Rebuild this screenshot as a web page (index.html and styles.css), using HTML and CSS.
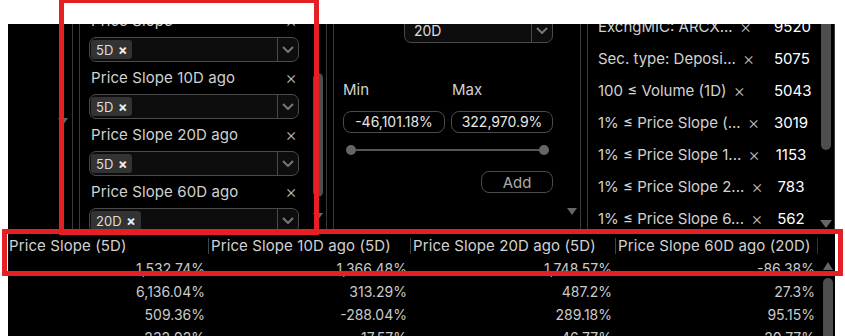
FILE: index.html
```html
<!DOCTYPE html>
<html lang="en">
<head>
  <meta charset="UTF-8">
  <meta name="viewport" content="width=device-width, initial-scale=1.0">
  <title>Screener</title>
  <link rel="stylesheet" href="styles.css">
</head>
<body>

  <div class="app">
    <div class="filtros">

      <div class="col col-a">
        <span class="flecha-abajo"></span>
      </div>

      <div class="col col-b">
        <div class="contenido lista">
          <div class="item">
            <div class="item-titulo"><span>Price Slope</span><span class="quitar">&times;</span></div>
            <div class="select">
              <div class="chips"><span class="chip">5D <b>&times;</b></span></div>
              <span class="select-flecha"><svg width="12" height="7" viewBox="0 0 12 7"><polyline points="1,1 6,6 11,1" fill="none" stroke="#777" stroke-width="2"/></svg></span>
            </div>
          </div>
          <div class="item">
            <div class="item-titulo"><span>Price Slope 10D ago</span><span class="quitar">&times;</span></div>
            <div class="select">
              <div class="chips"><span class="chip">5D <b>&times;</b></span></div>
              <span class="select-flecha"><svg width="12" height="7" viewBox="0 0 12 7"><polyline points="1,1 6,6 11,1" fill="none" stroke="#777" stroke-width="2"/></svg></span>
            </div>
          </div>
          <div class="item">
            <div class="item-titulo"><span>Price Slope 20D ago</span><span class="quitar">&times;</span></div>
            <div class="select">
              <div class="chips"><span class="chip">5D <b>&times;</b></span></div>
              <span class="select-flecha"><svg width="12" height="7" viewBox="0 0 12 7"><polyline points="1,1 6,6 11,1" fill="none" stroke="#777" stroke-width="2"/></svg></span>
            </div>
          </div>
          <div class="item">
            <div class="item-titulo"><span>Price Slope 60D ago</span><span class="quitar">&times;</span></div>
            <div class="select">
              <div class="chips"><span class="chip">20D <b>&times;</b></span></div>
              <span class="select-flecha"><svg width="12" height="7" viewBox="0 0 12 7"><polyline points="1,1 6,6 11,1" fill="none" stroke="#777" stroke-width="2"/></svg></span>
            </div>
          </div>
        </div>
        <div class="gutter gutter-b">
          <div class="thumb"></div>
          <span class="flecha-abajo"></span>
        </div>
      </div>

      <div class="col col-c">
        <div class="contenido rango">
          <div class="select plano">
            <span class="plano-texto">20D</span>
            <span class="select-flecha"><svg width="12" height="7" viewBox="0 0 12 7"><polyline points="1,1 6,6 11,1" fill="none" stroke="#777" stroke-width="2"/></svg></span>
          </div>
          <div class="min-max etiquetas">
            <span>Min</span>
            <span class="max">Max</span>
          </div>
          <div class="min-max valores">
            <span class="valor">-46,101.18%</span>
            <span class="valor">322,970.9%</span>
          </div>
          <div class="slider">
            <span class="knob"></span>
            <span class="pista"></span>
            <span class="knob"></span>
          </div>
          <button type="button" class="add">Add</button>
        </div>
        <div class="gutter gutter-c">
          <span class="flecha-abajo"></span>
        </div>
      </div>

      <div class="col col-d">
        <div class="contenido resumen">
          <div class="fila-filtro"><span>ExchgMIC: ARCX...</span><span class="quitar">&times;</span><span class="num">9520</span></div>
          <div class="fila-filtro"><span>Sec. type: Deposi...</span><span class="quitar">&times;</span><span class="num">5075</span></div>
          <div class="fila-filtro"><span>100 &le; Volume (1D)</span><span class="quitar">&times;</span><span class="num">5043</span></div>
          <div class="fila-filtro"><span>1% &le; Price Slope (...</span><span class="quitar">&times;</span><span class="num">3019</span></div>
          <div class="fila-filtro"><span>1% &le; Price Slope 1...</span><span class="quitar">&times;</span><span class="num">1153</span></div>
          <div class="fila-filtro"><span>1% &le; Price Slope 2...</span><span class="quitar">&times;</span><span class="num">783</span></div>
          <div class="fila-filtro"><span>1% &le; Price Slope 6...</span><span class="quitar">&times;</span><span class="num">562</span></div>
        </div>
        <div class="gutter gutter-d">
          <div class="thumb"></div>
          <span class="flecha-abajo ancha"></span>
        </div>
      </div>

    </div>

    <div class="tabla">
      <div class="cabecera">
        <div class="th">Price Slope (5D)</div>
        <div class="th">Price Slope 10D ago (5D)</div>
        <div class="th">Price Slope 20D ago (5D)</div>
        <div class="th">Price Slope 60D ago (20D)</div>
      </div>
      <div class="cuerpo">
        <div class="filas">
          <div class="fila"><span>1,532.74%</span><span>1,366.48%</span><span>1,748.57%</span><span>-86.38%</span></div>
          <div class="fila"><span>6,136.04%</span><span>313.29%</span><span>487.2%</span><span>27.3%</span></div>
          <div class="fila"><span>509.36%</span><span>-288.04%</span><span>289.18%</span><span>95.15%</span></div>
          <div class="fila"><span>232.92%</span><span>17.57%</span><span>46.77%</span><span>20.77%</span></div>
        </div>
        <div class="barra-tabla">
          <span class="flecha-arriba"></span>
          <div class="thumb"></div>
        </div>
      </div>
    </div>
  </div>

  <!-- marcas rojas de la captura -->
  <div class="marca marca-filtros"></div>
  <div class="marca marca-cabecera"></div>

</body>
</html>
```

FILE: styles.css
```css
/* pantalla del screener */
body {
  font-family: 'Inter', 'Liberation Sans', sans-serif;
  font-size: 14px;
  background-color: #fff;
  color: #d2d2d2;
  margin: 0;
  padding: 0;
}

.app {
  margin: 24px 10px 0 8px;
  height: 312px;
  background-color: #000;
  overflow: hidden;
}

.filtros {
  display: flex;
  gap: 6px;
  height: 210px;
}

.col {
  display: flex;
  flex: none;
  overflow: hidden;
  border-right: 1px solid #3a3a3a;
}

.col-a {
  width: 65px;
  box-sizing: border-box;
  justify-content: flex-end;
  align-items: flex-start;
}

.col-a .flecha-abajo {
  margin: 94px 4px 0 0;
}

.col-b,
.col-c,
.col-d {
  width: 248px;
  box-sizing: border-box;
  border-left: 1px solid #3a3a3a;
  padding-left: 9px;
}

.contenido {
  width: 210px;
  flex: none;
}

.gutter {
  width: 11px;
  margin-left: 13px;
  display: flex;
  flex-direction: column;
  align-items: center;
}

.thumb {
  width: 10px;
  background-color: #4e4e4e;
  border-radius: 5px;
}

.flecha-abajo {
  display: block;
  width: 0;
  height: 0;
  border-left: 5px solid transparent;
  border-right: 5px solid transparent;
  border-top: 7px solid #666;
}

.flecha-abajo.ancha {
  border-left-width: 6px;
  border-right-width: 6px;
  border-top-width: 8px;
}

.flecha-arriba {
  display: block;
  width: 0;
  height: 0;
  border-left: 5px solid transparent;
  border-right: 5px solid transparent;
  border-bottom: 8px solid #666;
}

/* columna de filtros */
.lista {
  margin-top: -11px;
}

.item {
  margin-bottom: 8px;
}

.item-titulo {
  display: flex;
  justify-content: space-between;
  align-items: flex-start;
  height: 22px;
  line-height: 16px;
  padding: 0 2px 0 2px;
  font-size: 15px;
  letter-spacing: 0.1px;
  white-space: nowrap;
}

.quitar {
  color: #b8b8b8;
  font-size: 18px;
  font-weight: 300;
}

.select {
  display: flex;
  margin-top: 2px;
  height: 25px;
  box-sizing: border-box;
  border: 1px solid #4a4a4a;
  border-radius: 7px;
  background-color: #0d0d0d;
}

.chips {
  flex: 1;
  display: flex;
  align-items: center;
  padding-left: 1px;
}

.chip {
  background-color: #333;
  border-radius: 3px;
  padding: 0 5px;
  height: 19px;
  line-height: 19px;
  font-size: 13px;
  color: #ddd;
}

.chip b {
  margin-left: 1px;
  font-size: 14px;
  color: #eee;
}

.select-flecha {
  width: 20px;
  border-left: 1px solid #4a4a4a;
  display: flex;
  align-items: center;
  justify-content: center;
}

.gutter-b .thumb {
  margin-top: 49px;
  height: 124px;
}

.gutter-b .flecha-abajo {
  margin-top: 16px;
}

/* columna min / max */
.rango {
  margin-top: -6px;
}

.select.plano {
  width: 149px;
  margin: 0 0 0 auto;
}

.plano-texto {
  flex: 1;
  padding-left: 9px;
  line-height: 23px;
  color: #ddd;
}

.min-max {
  display: grid;
  grid-template-columns: 102px 1fr;
  column-gap: 6px;
  margin-top: 37px;
  line-height: 20px;
}

.etiquetas {
  font-size: 15px;
}

.max {
  padding-left: 1px;
}

.valores {
  margin-top: 11px;
}

.valor {
  height: 22px;
  box-sizing: border-box;
  border: 1px solid #4a4a4a;
  border-radius: 8px;
  text-align: center;
  color: #e6e6e6;
}

.slider {
  display: flex;
  align-items: center;
  height: 10px;
  margin: 12px 4px 0 3px;
}

.knob {
  width: 10px;
  height: 10px;
  border-radius: 50%;
  background-color: #666;
}

.pista {
  flex: 1;
  height: 2px;
  background-color: #555;
}

.add {
  display: block;
  margin: 16px 0 0 auto;
  width: 72px;
  height: 22px;
  background-color: transparent;
  border: 1px solid #4a4a4a;
  border-radius: 8px;
  color: #aaa;
  font-family: inherit;
  font-size: 15px;
  padding: 0;
}

.gutter-c .flecha-abajo {
  margin-top: 184px;
}

/* columna resumen */
.col-d {
  padding-left: 10px;
}

.resumen {
  margin-top: -14px;
}

.fila-filtro {
  display: flex;
  align-items: center;
  height: 32px;
  font-size: 15px;
  white-space: nowrap;
}

.fila-filtro .quitar {
  margin-left: 7px;
}

.num {
  width: 34px;
  margin-left: auto;
  text-align: center;
  color: #fff;
}

.gutter-d {
  margin-left: 12px;
}

.gutter-d .thumb {
  margin-top: -5px;
  height: 131px;
}

.gutter-d .flecha-abajo {
  margin-top: 70px;
}

/* tabla de resultados */
.cabecera,
.fila {
  display: grid;
  grid-template-columns: 200px 202px 205px 203px;
}

.cabecera {
  height: 23px;
  align-items: center;
}

.th {
  line-height: 16px;
  padding-left: 1px;
  font-size: 15px;
  letter-spacing: 0.1px;
  white-space: nowrap;
  overflow: hidden;
}

.th + .th {
  border-left: 1px solid #444;
  padding-left: 2px;
}

.th:last-child {
  border-right: 1px solid #333;
}

.cuerpo {
  display: flex;
}

.filas {
  width: 810px;
}

.fila {
  height: 23px;
  line-height: 23px;
  color: #cacaca;
}

.fila span {
  text-align: right;
  padding-right: 3px;
}

.barra-tabla {
  width: 10px;
  margin-left: 5px;
  display: flex;
  flex-direction: column;
  align-items: center;
}

.barra-tabla .flecha-arriba {
  margin-top: 5px;
}

.barra-tabla .thumb {
  margin-top: 8px;
  height: 80px;
}

/* recuadros rojos encima */
.marca {
  position: absolute;
  box-sizing: border-box;
  border: 5px solid #e42024;
}

.marca-filtros {
  left: 59px;
  top: -2px;
  width: 260px;
  height: 237px;
}

.marca-cabecera {
  left: 2px;
  top: 229px;
  width: 841px;
  height: 47px;
}
```
